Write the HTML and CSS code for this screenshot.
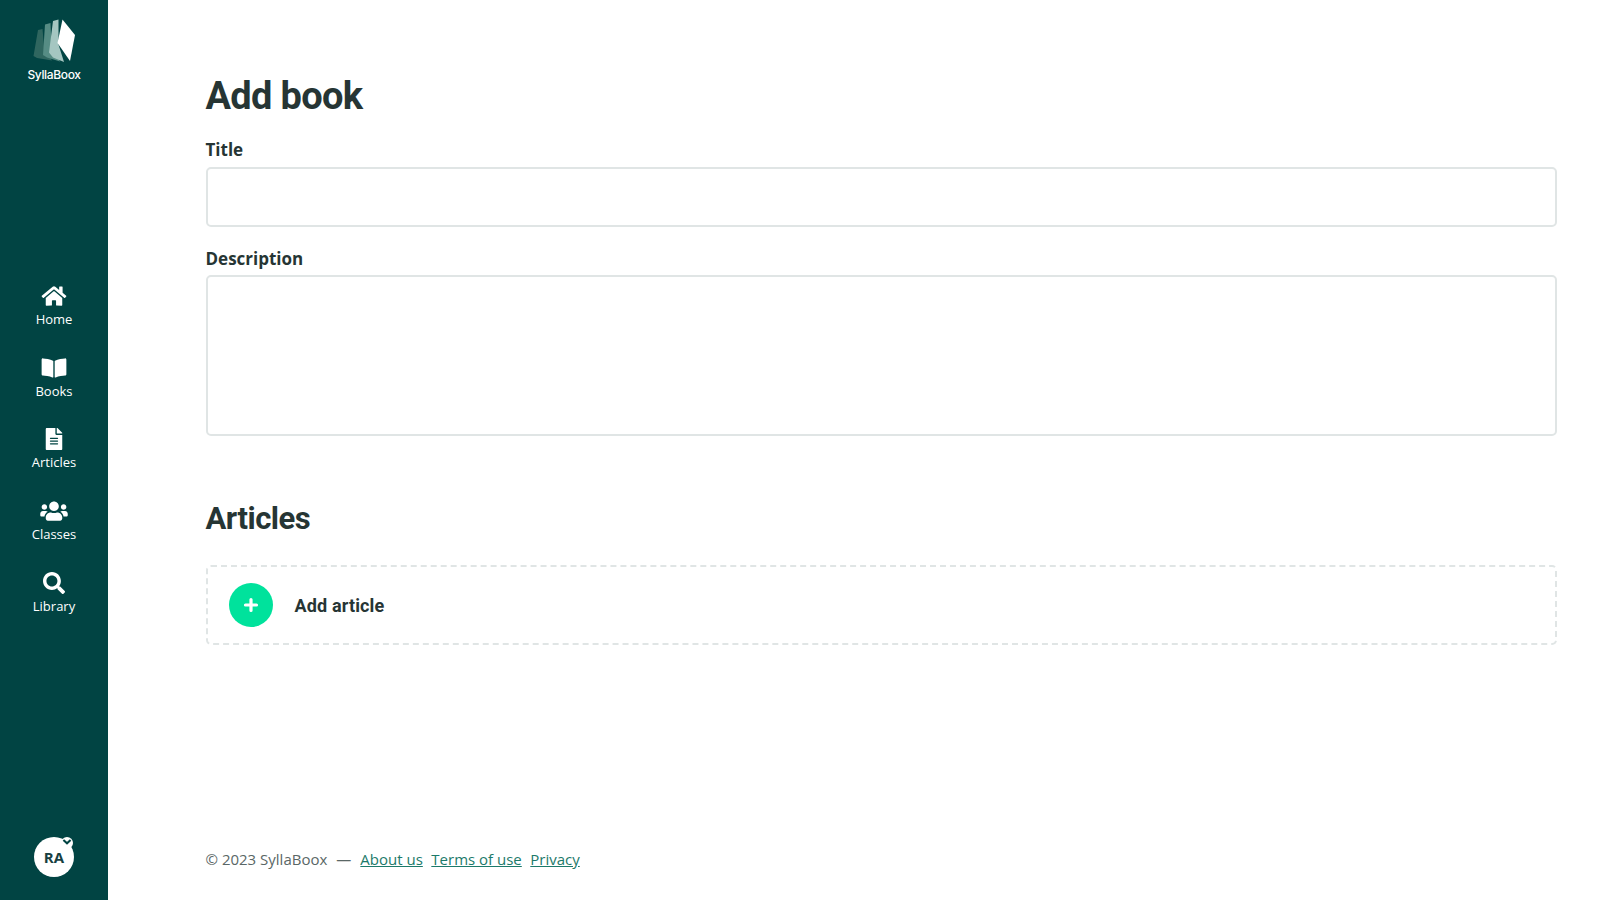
FILE: index.html
```html
<!DOCTYPE html>
<html lang="en">
<head>
<meta charset="utf-8">
<title>Add book - SyllaBoox</title>
<link rel="stylesheet" href="styles.css">
</head>
<body>
<div class="app">
  <aside class="sidebar">
    <a class="logo" href="#">
      <svg class="logo-mark" viewBox="32 18 43 46" aria-hidden="true">
        <path fill="#2f665f" d="M37 30l4.500-1 1.500 17 8 14.500-15-2.500-3.500-2z"/>
        <path fill="#568c84" d="M44 24.500l5.500-1.500 1 23 8.500 15.500-13-4-4-2.500z"/>
        <path fill="#a5c6c1" d="M52 21l5.500-1.500 0 25 5.500 17.500-11-4.500-4-5z"/>
        <path fill="#ffffff" d="M61.500 19.500L74 35l-5 26-12.500-18z"/>
      </svg>
      <span class="logo-text">SyllaBoox</span>
    </a>
    <nav class="nav">
      <a class="nav-item" href="#">
        <svg class="icon" viewBox="0 0 576 512"><path d="M280.37 148.26L96 300.11V464a16 16 0 0 0 16 16l112.06-.29a16 16 0 0 0 15.92-16V368a16 16 0 0 1 16-16h64a16 16 0 0 1 16 16v95.64a16 16 0 0 0 16 16.05L464 480a16 16 0 0 0 16-16V300L295.67 148.26a12.19 12.19 0 0 0-15.3 0zM571.6 251.47L488 182.56V44.05a12 12 0 0 0-12-12h-56a12 12 0 0 0-12 12v72.61L318.47 43a48 48 0 0 0-61 0L4.34 251.47a12 12 0 0 0-1.6 16.9l25.5 31A12 12 0 0 0 45.15 301l235.22-193.74a12.19 12.19 0 0 1 15.3 0L530.9 301a12 12 0 0 0 16.9-1.6l25.5-31a12 12 0 0 0-1.7-16.93z"/></svg>
        <span>Home</span>
      </a>
      <a class="nav-item" href="#">
        <svg class="icon" viewBox="0 0 576 512"><path d="M542.22 32.05c-54.8 3.11-163.72 14.43-230.96 55.59-4.64 2.84-7.27 7.89-7.27 13.17v363.87c0 11.55 12.63 18.85 23.28 13.49 69.18-34.82 169.23-44.32 218.7-46.92 16.89-.89 30.02-14.43 30.02-30.66V62.75c.01-17.71-15.35-31.74-33.77-30.7zM264.73 87.64C197.5 46.48 88.58 35.17 33.78 32.05 15.36 31.01 0 45.04 0 62.75V400.6c0 16.24 13.13 29.78 30.02 30.66 49.49 2.6 149.59 12.11 218.77 46.95 10.62 5.35 23.21-1.94 23.21-13.46V100.63c0-5.29-2.62-10.14-7.27-12.99z"/></svg>
        <span>Books</span>
      </a>
      <a class="nav-item" href="#">
        <svg class="icon" viewBox="0 0 384 512"><path d="M224 136V0H24C10.7 0 0 10.7 0 24v464c0 13.3 10.7 24 24 24h336c13.3 0 24-10.7 24-24V160H248c-13.2 0-24-10.8-24-24zm64 236c0 6.6-5.4 12-12 12H108c-6.6 0-12-5.4-12-12v-8c0-6.6 5.4-12 12-12h168c6.6 0 12 5.4 12 12v8zm0-64c0 6.6-5.4 12-12 12H108c-6.6 0-12-5.4-12-12v-8c0-6.6 5.4-12 12-12h168c6.6 0 12 5.4 12 12v8zm0-72v8c0 6.6-5.4 12-12 12H108c-6.6 0-12-5.4-12-12v-8c0-6.6 5.4-12 12-12h168c6.6 0 12 5.4 12 12zm96-114.1v6.1H256V0h6.1c6.4 0 12.5 2.5 17 7l97.9 98c4.5 4.5 7 10.6 7 16.9z"/></svg>
        <span>Articles</span>
      </a>
      <a class="nav-item" href="#">
        <svg class="icon" viewBox="0 0 640 512"><path d="M96 224c35.3 0 64-28.7 64-64s-28.7-64-64-64-64 28.7-64 64 28.7 64 64 64zm448 0c35.3 0 64-28.7 64-64s-28.7-64-64-64-64 28.7-64 64 28.7 64 64 64zm32 32h-64c-17.6 0-33.5 7.1-45.1 18.6 40.3 22.1 68.9 62 75.1 109.4h66c17.7 0 32-14.3 32-32v-32c0-35.3-28.7-64-64-64zm-256 0c61.9 0 112-50.1 112-112S381.9 32 320 32 208 82.1 208 144s50.1 112 112 112zm76.8 32h-8.3c-20.8 10-43.9 16-68.5 16s-47.6-6-68.5-16h-8.3C179.6 288 128 339.6 128 403.2V432c0 26.5 21.5 48 48 48h288c26.5 0 48-21.5 48-48v-28.8c0-63.6-51.6-115.2-115.2-115.2zm-223.7-13.4C161.5 263.1 145.6 256 128 256H64c-35.3 0-64 28.7-64 64v32c0 17.7 14.3 32 32 32h65.9c6.3-47.4 34.9-87.3 75.2-109.4z"/></svg>
        <span>Classes</span>
      </a>
      <a class="nav-item" href="#">
        <svg class="icon" viewBox="0 0 512 512"><path d="M505 442.7L405.3 343c-4.5-4.5-10.6-7-17-7H372c27.6-35.3 44-79.7 44-128C416 93.1 322.9 0 208 0S0 93.1 0 208s93.1 208 208 208c48.3 0 92.7-16.4 128-44v16.3c0 6.4 2.5 12.5 7 17l99.7 99.7c9.4 9.4 24.6 9.4 33.9 0l28.3-28.3c9.4-9.4 9.4-24.6.1-34zM208 336c-70.7 0-128-57.2-128-128 0-70.7 57.2-128 128-128 70.7 0 128 57.2 128 128 0 70.7-57.2 128-128 128z"/></svg>
        <span>Library</span>
      </a>
    </nav>
    <div class="avatar">
      RA
      <span class="avatar-badge">
        <svg viewBox="0 0 10 10"><path d="M2 2.500l3 2.800 3-2.800" fill="none" stroke="#014443" stroke-width="1.700"/></svg>
      </span>
    </div>
  </aside>
  <main class="main">
    <h1 class="page-title">Add book</h1>
    <label class="field-label" for="title">Title</label>
    <input class="input" id="title" type="text">
    <label class="field-label field-label-second" for="description">Description</label>
    <textarea class="input textarea" id="description"></textarea>
    <h2 class="section-title">Articles</h2>
    <button class="add-article" type="button">
      <span class="add-circle">
        <svg viewBox="0 0 16 16"><path d="M8 2.500v11M2.500 8h11" stroke="#fff" stroke-width="3.200" stroke-linecap="round"/></svg>
      </span>
      <span class="add-text">Add article</span>
    </button>
    <footer class="footer">
      <span>© 2023 SyllaBoox</span>
      <span class="dash">—</span>
      <a href="#">About us</a>
      <a href="#">Terms of use</a>
      <a href="#">Privacy</a>
    </footer>
  </main>
</div>
</body>
</html>
```

FILE: styles.css
```css
* { box-sizing: border-box; }
html, body { margin: 0; height: 100%; overflow: hidden; background: #fff; }
body { font-family: "Open Sans", sans-serif; color: #263534; }
.app { display: flex; height: 900px; }

.sidebar {
  width: 108px;
  flex: none;
  background: #014443;
  display: flex;
  flex-direction: column;
  align-items: center;
  color: #fff;
}
.logo { display: flex; flex-direction: column; align-items: center; padding-top: 18px; color: #fff; text-decoration: none; }
.logo-mark { width: 43px; height: 46px; display: block; }
.logo-text { font-family: "Inter", sans-serif; font-size: 12px; font-weight: 500; letter-spacing: -0.35px; line-height: 16px; margin-top: 3px; }

.nav { margin-top: 201px; display: flex; flex-direction: column; width: 100%; }
.nav-item {
  height: 71.7px;
  display: flex;
  flex-direction: column;
  align-items: center;
  color: #fff;
  text-decoration: none;
  font-size: 13px;
  line-height: 18px;
}
.icon { width: 28px; height: 22px; fill: #fff; display: block; margin-top: 1px; margin-bottom: 3px; }

.avatar {
  margin-top: auto;
  margin-bottom: 23px;
  width: 40px;
  height: 40px;
  border-radius: 50%;
  background: #fff;
  color: #183f42;
  display: flex;
  align-items: center;
  justify-content: center;
  font-size: 15px;
  font-weight: 700;
  position: relative;
}
.avatar-badge {
  position: absolute;
  top: 0;
  right: 1px;
  width: 12px;
  height: 12px;
  border-radius: 50%;
  background: #fff;
  display: flex;
}
.avatar-badge svg { width: 12px; height: 12px; }

.main {
  flex: 1;
  display: flex;
  flex-direction: column;
  align-items: stretch;
  padding: 0 43.500px 0 97.500px;
  min-width: 0;
}
.page-title {
  font-family: Roboto, sans-serif;
  font-size: 38px;
  font-weight: 700;
  line-height: 48px;
  letter-spacing: -0.7px;
  margin: 72px 0 0;
}
.field-label { display: block; font-size: 17px; font-weight: 700; line-height: 24px; margin-top: 18px; margin-bottom: 5px; }
.field-label-second { margin-top: 20px; margin-bottom: 4px; }
.input {
  display: block;
  width: 100%;
  height: 60px;
  border: 2px solid #e0e5e5;
  border-radius: 5px;
  background: #fff;
  padding: 8px 12px;
  outline: none;
  font: inherit;
  resize: none;
}
.textarea { height: 161px; }
.section-title {
  font-family: Roboto, sans-serif;
  font-size: 31px;
  font-weight: 700;
  line-height: 40px;
  letter-spacing: -0.5px;
  margin: 63px 0 0;
}
.add-article {
  margin-top: 26px;
  height: 80px;
  border: 2px dashed #e0e5e5;
  border-radius: 5px;
  background: #fff;
  display: flex;
  align-items: center;
  padding: 0 0 0 21px;
  text-align: left;
  color: inherit;
}
.add-circle {
  width: 44px;
  height: 44px;
  border-radius: 50%;
  background: #00e29c;
  display: flex;
  align-items: center;
  justify-content: center;
}
.add-circle svg { width: 16px; height: 16px; }
.add-text { font-family: Roboto, sans-serif; font-size: 18px; font-weight: 700; letter-spacing: 0.15px; margin-left: 22px; }

.footer {
  margin-top: auto;
  margin-bottom: 30px;
  display: flex;
  font-size: 15px;
  line-height: 22px;
  color: #5a6766;
}
.footer a { color: #1c7a6a; margin-right: 8.500px; }
.dash { margin: 0 9px; }
```
